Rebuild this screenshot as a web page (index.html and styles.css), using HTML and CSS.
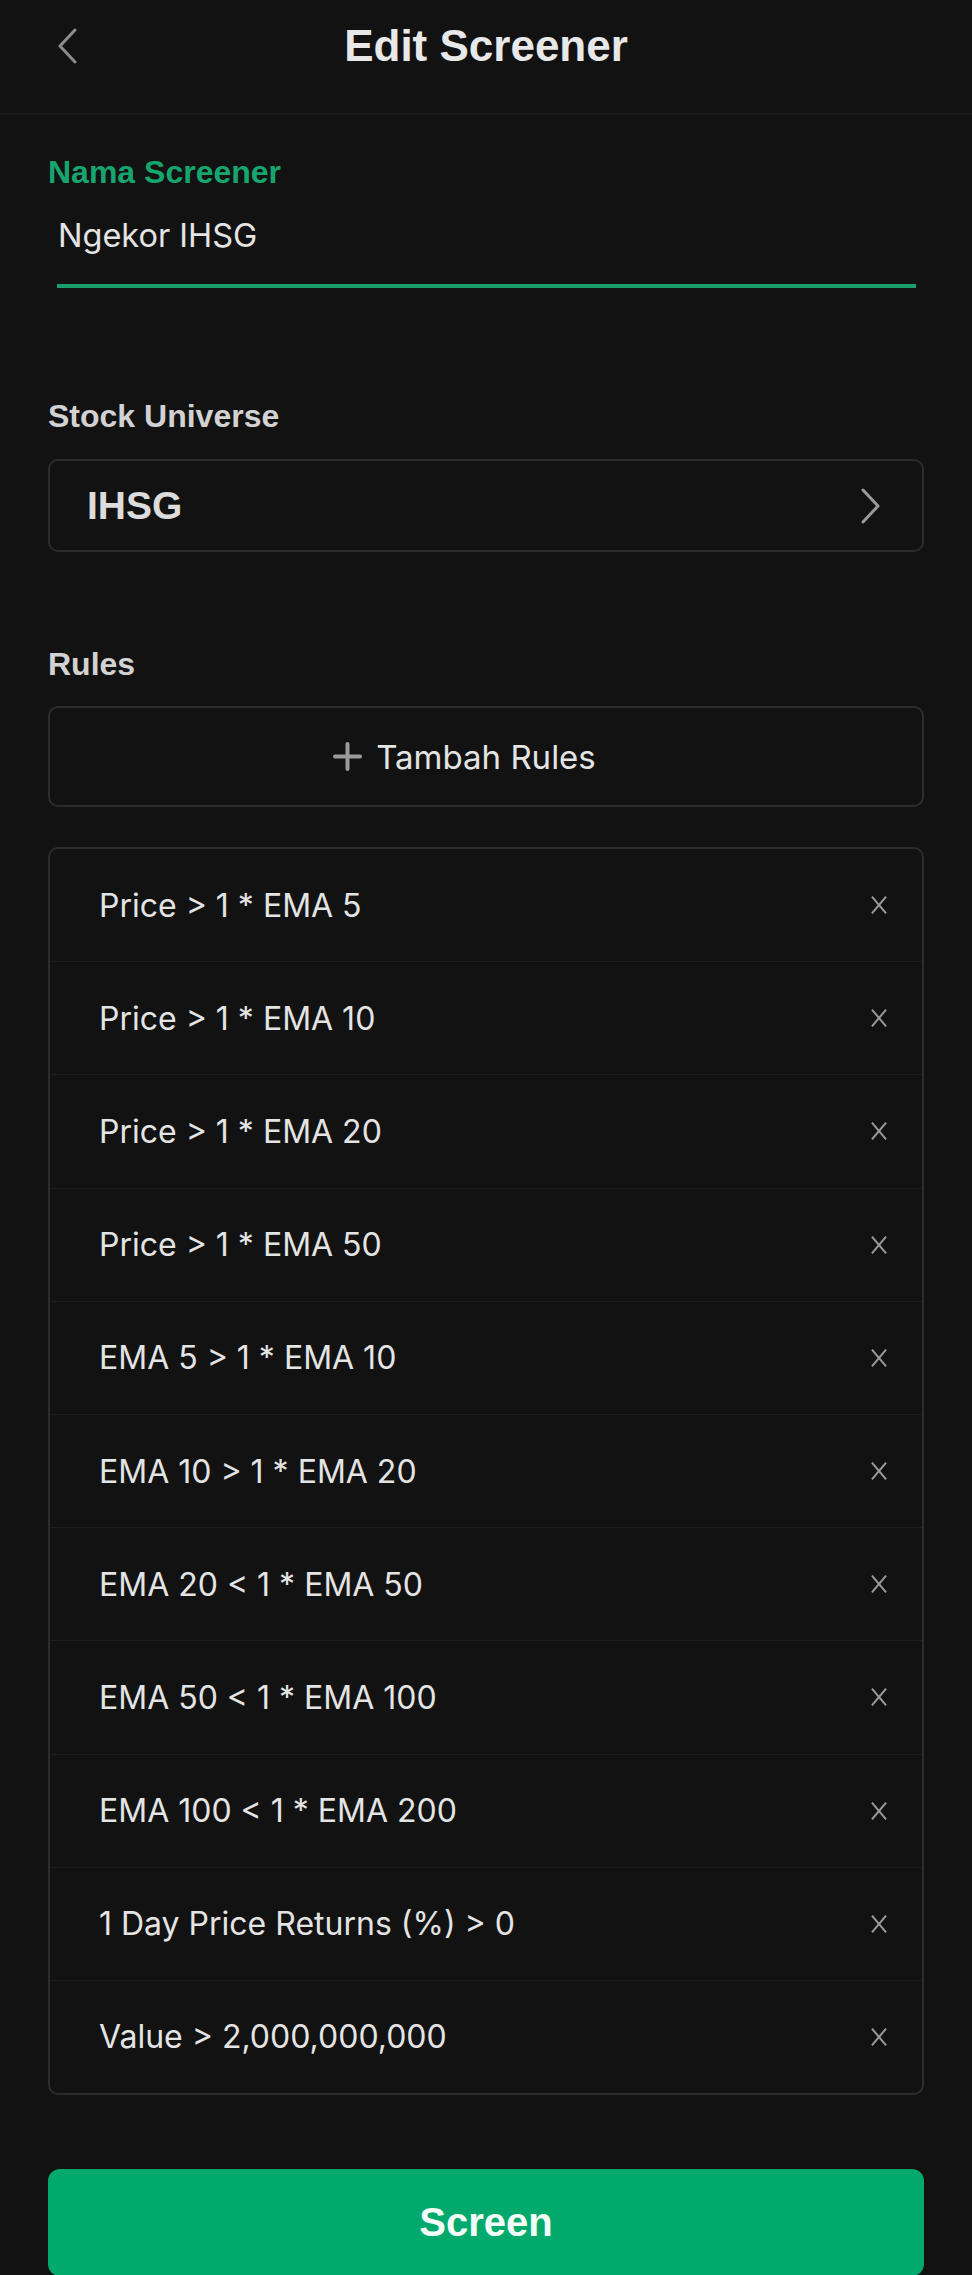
FILE: index.html
```html
<!DOCTYPE html>
<html lang="id">
<head>
    <meta charset="UTF-8">
    <meta name="viewport" content="width=device-width, initial-scale=1.0">
    <title>Edit Screener</title>
    <link rel="stylesheet" href="styles.css">
</head>
<body>

    <header class="topbar">
        <a href="#" class="back-link" aria-label="Kembali">
            <svg width="22" height="36" viewBox="0 0 22 36">
                <path d="M19 2 L4 18 L19 34" fill="none" stroke="#8c8c8c" stroke-width="3" stroke-linecap="round" stroke-linejoin="round"/>
            </svg>
        </a>
        <h1>Edit Screener</h1>
        <span></span>
    </header>

    <main class="form">
        <label class="label label-active" for="name">Nama Screener</label>
        <div class="field">
            <input type="text" id="name" value="Ngekor IHSG">
        </div>

        <p class="label label-section">Stock Universe</p>
        <a href="#" class="select-box">
            <span>IHSG</span>
            <svg width="22" height="36" viewBox="0 0 22 36">
                <path d="M3 2 L18 18 L3 34" fill="none" stroke="#9a9a9a" stroke-width="3" stroke-linecap="round" stroke-linejoin="round"/>
            </svg>
        </a>

        <p class="label label-rules">Rules</p>
        <button type="button" class="add-rule">
            <svg width="29" height="29" viewBox="0 0 29 29">
                <path d="M14.5 2 V27 M2 14.5 H27" fill="none" stroke="#9a9a9a" stroke-width="4" stroke-linecap="round"/>
            </svg>
            <span>Tambah Rules</span>
        </button>

        <ul class="rules">
            <li><span>Price &gt; 1 * EMA 5</span><i class="remove"></i></li>
            <li><span>Price &gt; 1 * EMA 10</span><i class="remove"></i></li>
            <li><span>Price &gt; 1 * EMA 20</span><i class="remove"></i></li>
            <li><span>Price &gt; 1 * EMA 50</span><i class="remove"></i></li>
            <li><span>EMA 5 &gt; 1 * EMA 10</span><i class="remove"></i></li>
            <li><span>EMA 10 &gt; 1 * EMA 20</span><i class="remove"></i></li>
            <li><span>EMA 20 &lt; 1 * EMA 50</span><i class="remove"></i></li>
            <li><span>EMA 50 &lt; 1 * EMA 100</span><i class="remove"></i></li>
            <li><span>EMA 100 &lt; 1 * EMA 200</span><i class="remove"></i></li>
            <li><span>1 Day Price Returns (%) &gt; 0</span><i class="remove"></i></li>
            <li><span>Value &gt; 2,000,000,000</span><i class="remove"></i></li>
        </ul>

        <button type="submit" class="screen-btn">Screen</button>
    </main>

</body>
</html>
```

FILE: styles.css
```css
body {
    font-family: 'Inter', 'Liberation Sans', sans-serif;
    background-color: #121212;
    color: #e4e4e4;
    margin: 0;
    height: 2275px;
    overflow: hidden;
}

.topbar {
    display: grid;
    grid-template-columns: 1fr auto 1fr;
    align-items: center;
    height: 115px;
    box-sizing: border-box;
    padding-bottom: 21px;
    border-bottom: 2px solid #1c1c1c;
}

.back-link {
    display: flex;
    padding-left: 56px;
}

h1 {
    margin: 0;
    font-family: 'Liberation Sans', sans-serif;
    font-size: 44px;
    font-weight: bold;
    color: #e8e8e8;
    line-height: 50px;
}

.form {
    padding: 0 48px;
}

.label {
    display: block;
    margin: 0;
    font-family: 'Liberation Sans', sans-serif;
    font-size: 32px;
    font-weight: bold;
    line-height: 38px;
    color: #d2d2d2;
}

.label-active {
    margin-top: 38px;
    color: #17a56e;
}

.label-section {
    margin-top: 109px;
}

.label-rules {
    margin-top: 93px;
}

.field {
    margin: 26px 8px 0 9px;
    padding-bottom: 29px;
    border-bottom: 4px solid #1a9e6c;
}

.field input {
    display: block;
    width: 100%;
    box-sizing: border-box;
    padding: 0 0 0 1px;
    border: none;
    background: transparent;
    font-family: 'Inter', sans-serif;
    font-size: 32.5px;
    line-height: 38px;
    height: 38px;
    color: #e4e4e4;
    outline: none;
}

.select-box {
    display: flex;
    align-items: center;
    justify-content: space-between;
    margin-top: 24px;
    height: 93px;
    box-sizing: border-box;
    padding: 0 40px 0 37px;
    border: 2px solid #2c2c2c;
    border-radius: 10px;
    text-decoration: none;
    font-family: 'Liberation Sans', sans-serif;
    font-size: 39px;
    font-weight: bold;
    color: #dcdcdc;
}

.add-rule {
    display: flex;
    align-items: center;
    justify-content: center;
    gap: 14px;
    width: 100%;
    height: 101px;
    margin-top: 23px;
    padding: 0 43px 0 0;
    background: transparent;
    border: 2px solid #2c2c2c;
    border-radius: 10px;
    font-family: 'Inter', sans-serif;
    font-size: 33px;
    color: #e4e4e4;
    cursor: pointer;
}

.rules {
    list-style: none;
    margin: 40px 0 0;
    padding: 0;
    border: 2px solid #2c2c2c;
    border-radius: 10px;
}

.rules li {
    display: flex;
    align-items: center;
    justify-content: space-between;
    height: 112.2px;
    padding: 0 34px 0 49px;
    border-bottom: 1px solid #1e1e1e;
    font-size: 32px;
}

.rules li:last-child {
    border-bottom: none;
}

.remove {
    position: relative;
    width: 18px;
    height: 18px;
}

.remove::before,
.remove::after {
    content: "";
    position: absolute;
    left: 8px;
    top: -2px;
    width: 2px;
    height: 22px;
    background: #9a9a9a;
    transform: rotate(40deg);
}

.remove::after {
    transform: rotate(-40deg);
}

.screen-btn {
    display: block;
    width: 100%;
    height: 107px;
    margin-top: 74px;
    border: none;
    border-radius: 12px;
    background-color: #02a96c;
    font-family: 'Liberation Sans', sans-serif;
    font-size: 40px;
    font-weight: bold;
    color: #f4fff9;
    cursor: pointer;
}
```
